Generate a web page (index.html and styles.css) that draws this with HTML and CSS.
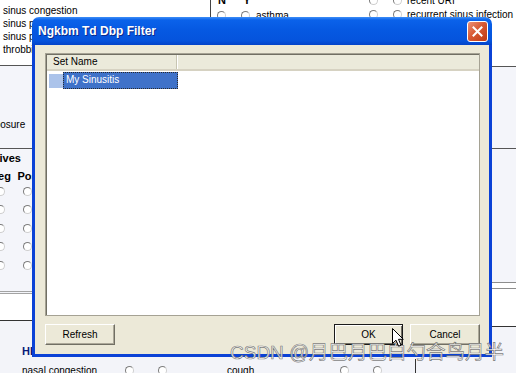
FILE: index.html
```html
<!DOCTYPE html>
<html lang="en">
  <head>
    <meta charset="UTF-8" />
    <title>Ngkbm Td Dbp Filter</title>
    <link rel="stylesheet" href="styles.css">
  </head>
  <body>
    <div class="screen">
      <!-- the form behind the dialog -->
      <div class="upper">
        <div class="col-l">
          <div class="blk-sym">
            <div>sinus congestion</div>
            <div>sinus pressure</div>
            <div>sinus pain</div>
            <div>throbbing headache</div>
          </div>
          <div class="blk-exp"><span class="exp">Exposure</span></div>
          <div class="blk-neg">
            <div class="neg-title">Negatives</div>
            <div class="rgrid">
              <b>Neg</b><b>Pos</b>
              <i class="radio"></i><i class="radio"></i>
              <i class="radio"></i><i class="radio"></i>
              <i class="radio"></i><i class="radio"></i>
              <i class="radio"></i><i class="radio"></i>
              <i class="radio"></i><i class="radio"></i>
            </div>
          </div>
          <div class="blk-gap"></div>
        </div>
        <div class="col-r">
          <div class="r1">
            <div class="sub-a">
              <div class="opt"><b class="hd">N</b><b class="hd">Y</b></div>
              <div class="opt"><i class="radio"></i><i class="radio"></i><span class="lbl">asthma</span></div>
              <div class="opt"><i class="radio"></i><i class="radio"></i><span class="lbl">allergies</span></div>
            </div>
            <div class="sub-b">
              <div class="opt"><i class="radio"></i><i class="radio"></i><span class="lbl">recent URI</span></div>
              <div class="opt"><i class="radio"></i><i class="radio"></i><span class="lbl">recurrent sinus infection</span></div>
            </div>
          </div>
          <div class="r2"></div>
          <div class="r3"></div>
          <div class="r4"></div>
          <div class="r5"></div>
        </div>
      </div>
      <div class="lower">
        <div class="sect-title">HEENT</div>
        <div class="row">
          <div class="row-l">
            <span class="lbl-a">nasal congestion</span>
            <i class="radio"></i><i class="radio gap"></i>
            <span class="lbl-b">cough</span>
            <i class="radio"></i><i class="radio gap"></i>
          </div>
          <div class="row-r"></div>
        </div>
      </div>

      <!-- dialog -->
      <div class="dialog">
        <div class="titlebar">
          <span class="title">Ngkbm Td Dbp Filter</span>
          <span class="close">
            <svg width="11" height="11" viewBox="0 0 11 11"><path d="M1.5 1.5 L9.5 9.5 M9.5 1.5 L1.5 9.5" stroke="#fff" stroke-width="2" stroke-linecap="square"/></svg>
          </span>
        </div>
        <div class="frame">
          <div class="dlg-body">
            <div class="list">
              <div class="list-head">
                <div class="hcol">Set Name</div>
                <div class="hrest"></div>
              </div>
              <div class="list-row">
                <span class="state"></span>
                <span class="sel">My Sinusitis</span>
              </div>
            </div>
            <div class="btns">
              <button class="btn">Refresh</button>
              <span class="spacer"></span>
              <button class="btn ok">OK</button>
              <button class="btn">Cancel</button>
            </div>
          </div>
        </div>
      </div>

      <div class="watermark">CSDN <span class="wm-cjk">@月巴月巴白勺合鸟月半</span></div>

      <svg class="cursor" width="13" height="20" viewBox="0 0 13 20">
        <path d="M0.5 0.5 L0.5 15.5 L4 12.2 L6.6 18.2 L9 17.2 L6.5 11.3 L11.3 11.3 Z" fill="#fff" stroke="#000" stroke-width="1" stroke-linejoin="round"/>
      </svg>
    </div>
  </body>
</html>
```

FILE: styles.css
```css
* {
  box-sizing: border-box;
}
body {
  margin: 0;
}
.screen {
  position: relative;
  width: 516px;
  height: 373px;
  overflow: hidden;
  background: #fff;
  color: #000;
  font-family: "Liberation Sans", Arial, sans-serif;
  font-size: 10px;
}
.radio {
  display: inline-block;
  width: 9px;
  height: 9px;
  border-radius: 50%;
  background: #fff;
  border: 1px solid;
  border-color: #7d7d7d #cfcfcf #cfcfcf #7d7d7d;
}

/* background form */
.upper {
  display: grid;
  grid-template-columns: 210px 1fr;
}
.col-l {
  background: #f3f4f9;
}
.blk-sym {
  height: 66px;
  padding: 4px 0 0 3px;
  line-height: 13px;
  white-space: nowrap;
  background: #fff;
  border-bottom: 1px solid #555;
}
.blk-exp {
  height: 83px;
  padding-top: 52px;
  line-height: 13px;
  background: #f4f5fa;
  border-bottom: 1px solid #555;
}
.exp {
  display: inline-block;
  margin-left: -17px;
}
.blk-neg {
  height: 145px;
  padding-top: 3px;
  background: #f4f5fa;
  border-bottom: 3px double #a3a3a3;
}
.neg-title {
  margin-left: -31px;
  font-weight: bold;
  font-size: 11px;
  line-height: 13px;
}
.rgrid {
  display: grid;
  grid-template-columns: 27px 27px;
  grid-template-rows: 13px repeat(5, 18.5px);
  justify-items: center;
  align-items: center;
  margin: 4px 0 0 -13px;
}
.rgrid b {
  font-size: 11px;
}
.blk-gap {
  height: 27px;
  background: #fff;
  border-bottom: 1px solid #333;
}
.col-r {
  border-left: 1px solid #444;
}
.r1 {
  display: flex;
  height: 67px;
  padding-left: 6px;
  overflow: hidden;
  background: #fff;
  border-bottom: 1px solid #555;
}
.sub-a {
  width: 152px;
  margin-top: -7px;
  display: flex;
  flex-direction: column;
  gap: 3px;
}
.sub-b {
  margin-top: -7px;
  white-space: nowrap;
}
.opt {
  display: flex;
  align-items: center;
  height: 13px;
}
.sub-b .opt {
  height: 14px;
}
.opt .radio + .radio,
.opt .hd + .hd {
  margin-left: 15px;
}
.hd {
  width: 10px;
  text-align: center;
  font-size: 11px;
}
.sub-a .lbl {
  margin-left: 6px;
}
.sub-b .lbl {
  margin-left: 5px;
}
.r2 {
  height: 82px;
  background: #f4f5fa;
  border-bottom: 1px solid #555;
}
.r3 {
  height: 134px;
  background: #f4f5fa;
  border-bottom: 1px solid #8d8d8d;
}
.r4 {
  height: 6px;
  background: #fff;
  border-bottom: 1px solid #8d8d8d;
}
.r5 {
  height: 38px;
  background: #fff;
  border-bottom: 1px solid #333;
}
.lower {
  height: 46px;
  padding: 18px 0 0 22px;
  background: #f3f4f9;
}
.sect-title {
  font-weight: bold;
  font-size: 11px;
  line-height: 13px;
  color: #0a1a78;
}
.row {
  display: grid;
  grid-template-columns: 393px 1fr;
  margin-top: 1px;
}
.row-l {
  display: flex;
  align-items: center;
  padding-top: 3px;
  line-height: 13px;
}
.lbl-a {
  width: 103px;
}
.lbl-b {
  width: 113px;
  margin-left: 60px;
}
.radio.gap {
  margin-left: 24px;
}
.row-r {
  height: 20px;
  border-left: 1px solid #333;
}

/* dialog */
.dialog {
  position: absolute;
  left: 32px;
  top: 17px;
  width: 460px;
  height: 340px;
  display: flex;
  flex-direction: column;
  border-radius: 7px 7px 0 0;
  overflow: hidden;
}
.titlebar {
  display: flex;
  align-items: center;
  justify-content: space-between;
  height: 28px;
  padding: 0 4px 0 6px;
  background: linear-gradient(#3d8ef7 0, #0b62ea 3px, #0659e2 45%, #0553dc 85%, #0343c8 100%);
}
.title {
  color: #fff;
  font-weight: bold;
  font-size: 12px;
  text-shadow: 1px 1px 0 #0a2a8c;
}
.close {
  display: flex;
  align-items: center;
  justify-content: center;
  width: 21px;
  height: 21px;
  border: 1px solid #fff;
  border-radius: 3px;
  background: linear-gradient(135deg, #eb9278, #d85a34 45%, #bd3a14);
}
.frame {
  flex: 1;
  display: flex;
  padding: 0 3px 3px;
  background: #0b42d6;
}
.dlg-body {
  flex: 1;
  display: flex;
  flex-direction: column;
  gap: 8px;
  padding: 8px 9px 9px 10px;
  background: #ece9d8;
}
.list {
  flex: 1;
  background: #fff;
  border: 1px solid #a5a294;
  box-shadow: inset 1px 1px 0 #716f64;
}
.list-head {
  display: flex;
  height: 16px;
  margin: 1px 0 0 1px;
  background: #ebeadb;
  border-bottom: 2px solid #d6d2c2;
}
.hcol {
  width: 130px;
  padding-left: 6px;
  line-height: 14px;
  border-right: 1px solid #c7c5b2;
}
.hrest {
  flex: 1;
  border-left: 1px solid #fff;
}
.list-row {
  display: flex;
  align-items: center;
  height: 17px;
  margin-top: 1px;
  padding-left: 3px;
}
.state {
  width: 14px;
  height: 14px;
  background: #abc3ea;
}
.sel {
  width: 115px;
  height: 17px;
  padding-left: 3px;
  line-height: 16px;
  color: #fff;
  background: #3f72c9;
  outline: 1px dotted #2a2a2a;
  outline-offset: -1px;
}
.btns {
  display: flex;
  gap: 7px;
  height: 21px;
}
.spacer {
  flex: 1;
}
.btn {
  width: 70px;
  height: 21px;
  padding: 0;
  font-family: "Liberation Sans", Arial, sans-serif;
  font-size: 10px;
  color: #000;
  background: #ece9d8;
  border: 1px solid;
  border-color: #fff #716f64 #716f64 #fff;
  box-shadow: inset -1px -1px 0 #aca899;
}
.ok {
  width: 69px;
  border-color: #1a1a1a;
  box-shadow: inset 1px 1px 0 #fff, inset -1px -1px 0 #716f64;
}

.watermark {
  position: absolute;
  left: 230px;
  top: 341px;
  line-height: 22px;
  font-size: 19px;
  font-family: "Liberation Sans", "Noto Sans CJK SC", sans-serif;
  color: rgba(255, 255, 255, 0.85);
  -webkit-text-stroke: 0.7px rgba(90, 90, 90, 0.8);
  white-space: nowrap;
}
.wm-cjk {
  font-size: 19.5px;
}
.cursor {
  position: absolute;
  left: 392px;
  top: 328px;
}
```
